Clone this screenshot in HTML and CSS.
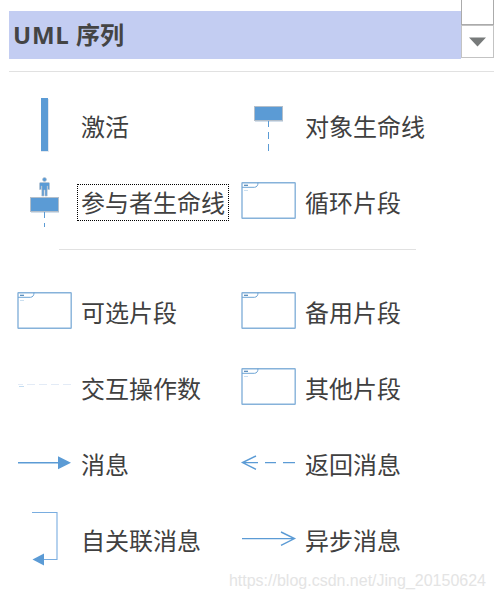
FILE: index.html
```html
<!DOCTYPE html>
<html lang="zh-CN">
<head>
<meta charset="utf-8">
<title>UML 序列</title>
<link rel="stylesheet" href="styles.css">
</head>
<body>
<svg width="0" height="0" class="defs">
  <defs>
    <g id="frame">
      <rect x="2" y="17.7" width="53.2" height="35.5" rx=".5" fill="#fff" stroke="#86b2da" stroke-width="1.4"/>
      <path d="M2 22.3H14.5Q18 22 18 17.5" fill="none" stroke="#6fa5d5"/>
      <path d="M4 20.3h4" stroke="#4f86b8" stroke-width="1.2"/>
    </g>
  </defs>
</svg>
<header class="top">
  <h1 class="title"><span class="latin">UML</span> 序列</h1>
  <div class="scroll">
    <div class="track"></div>
    <div class="down"><svg width="18" height="10"><path d="M0 0.5H17L8.5 9.5Z" fill="#777a7a"/></svg></div>
  </div>
</header>
<main class="panel">
  <section class="shapes">
    <div class="item"><svg class="icon"><path d="M25 9h7v53h-7z" fill="#5b9bd5"/><path d="M25 62.5h8M32.5 10v52" stroke="#e3e8ee"/></svg><span class="label">激活</span></div>
    <div class="item"><svg class="icon"><path d="M15 32.5h28" stroke="#d3dfeb"/><rect x="14.5" y="17.5" width="28" height="14" fill="#5b9bd5" stroke="#b4bfca"/><path d="M28.5 32v6M28.5 43v7M28.5 55v7" stroke="#5b9bd5"/></svg><span class="label">对象生命线</span></div>
    <div class="item"><svg class="icon"><g fill="#5b9bd5" stroke="#bcc4cd" stroke-width=".6"><circle cx="28.5" cy="14.5" r="2"/><path d="M24.5 17.5h8q1 0 1 1v6h-1.8v-3.5h-.5V31h-2.2v-6h-1v6h-2.2v-10h-.5v3.5h-1.8v-6q0-1 1-1z"/></g><path d="M15 47.5h28" stroke="#d3dfeb"/><rect x="14.5" y="32.5" width="28" height="14" fill="#5b9bd5" stroke="#b4bfca"/><path d="M28.5 47v6M28.5 58v4" stroke="#5b9bd5"/></svg><span class="label selected">参与者生命线</span></div>
    <div class="item"><svg class="icon"><use href="#frame"/><path d="M4 25.5h4" stroke="#cadff0"/></svg><span class="label">循环片段</span></div>
  </section>
  <div class="divider"></div>
  <section class="shapes">
    <div class="item"><svg class="icon"><use href="#frame"/><path d="M4 25.5h4" stroke="#cadff0"/></svg><span class="label">可选片段</span></div>
    <div class="item"><svg class="icon"><use href="#frame"/></svg><span class="label">备用片段</span></div>
    <div class="item"><svg class="icon"><path d="M2 33.5h5M11 33.5h8M23 33.5h8M35 33.5h8M47 33.5h8" stroke="#e3ebf6"/><path d="M3 35.5h5" stroke="#c3dcf1"/></svg><span class="label">交互操作数</span></div>
    <div class="item"><svg class="icon"><use href="#frame"/><path d="M4 25.5h4" stroke="#cadff0"/></svg><span class="label">其他片段</span></div>
    <div class="item"><svg class="icon"><path d="M2 35.7h41" stroke="#5b9bd5" stroke-width="1.5"/><path d="M42 29.2v13l13-6.5z" fill="#5b9bd5"/></svg><span class="label">消息</span></div>
    <div class="item"><svg class="icon"><path d="M2 35.6h16M25 35.6h11M43 35.6h12M16 29L2.5 35.6 16 42.4" fill="none" stroke="#5b9bd5" stroke-width="1.4"/></svg><span class="label">返回消息</span></div>
    <div class="item"><svg class="icon"><path d="M16 9.5h25v47H27" fill="none" stroke="#79ade0" stroke-width="1.1"/><path d="M28 50.5v12l-11.5-6z" fill="#5b9bd5"/></svg><span class="label">自关联消息</span></div>
    <div class="item"><svg class="icon"><path d="M2 35.6h53M41 29L54.5 35.6 41 42.4" fill="none" stroke="#5b9bd5" stroke-width="1.4"/></svg><span class="label">异步消息</span></div>
  </section>
</main>
<footer class="mark">https://blog.csdn.net/Jing_20150624</footer>
</body>
</html>
```
FILE: styles.css
```css
* { box-sizing: border-box; }
body {
  margin: 0;
  width: 494px;
  height: 599px;
  overflow: hidden;
  background: #fff;
  color: #404040;
  font-family: "Noto Sans CJK SC", sans-serif;
}
.defs { display: block; }
.top {
  display: flex;
  height: 72px;
  margin-left: 9px;
  border-bottom: 1px solid #e1e1e1;
}
.title {
  width: 452px;
  height: 48px;
  margin: 11px 0 0;
  padding-left: 4px;
  background: #c3cdf2;
  color: #444;
  font: 700 24px/48px "Open Sans", "Noto Sans CJK SC", sans-serif;
}
.latin { letter-spacing: 0.8px; }
.scroll { width: 33px; }
.track {
  height: 25px;
  border: 1px solid #ababab;
  border-top: 0;
}
.down {
  display: flex;
  justify-content: center;
  align-items: center;
  height: 33px;
  border: 1px solid #c3c3c3;
}
.panel { padding: 17px 0 0 16px; }
.shapes {
  display: grid;
  grid-template-columns: 224px 224px;
  grid-auto-rows: 76px;
}
.item {
  display: flex;
  align-items: center;
}
.icon {
  flex: none;
  width: 61px;
  height: 76px;
}
.label {
  height: 37px;
  margin-bottom: 1px;
  padding: 0 3px;
  border: 1px solid transparent;
  font-size: 24px;
  line-height: 34px;
  white-space: nowrap;
}
.selected { border: 1px dotted #000; }
.divider {
  width: 357px;
  height: 1px;
  margin: 8px 0 25px 43px;
  background: #e1e1e1;
}
.mark {
  margin: -8px 8px 0 0;
  color: #e4e4e4;
  font: 16px/20px "Liberation Sans", sans-serif;
  text-align: right;
}
```
